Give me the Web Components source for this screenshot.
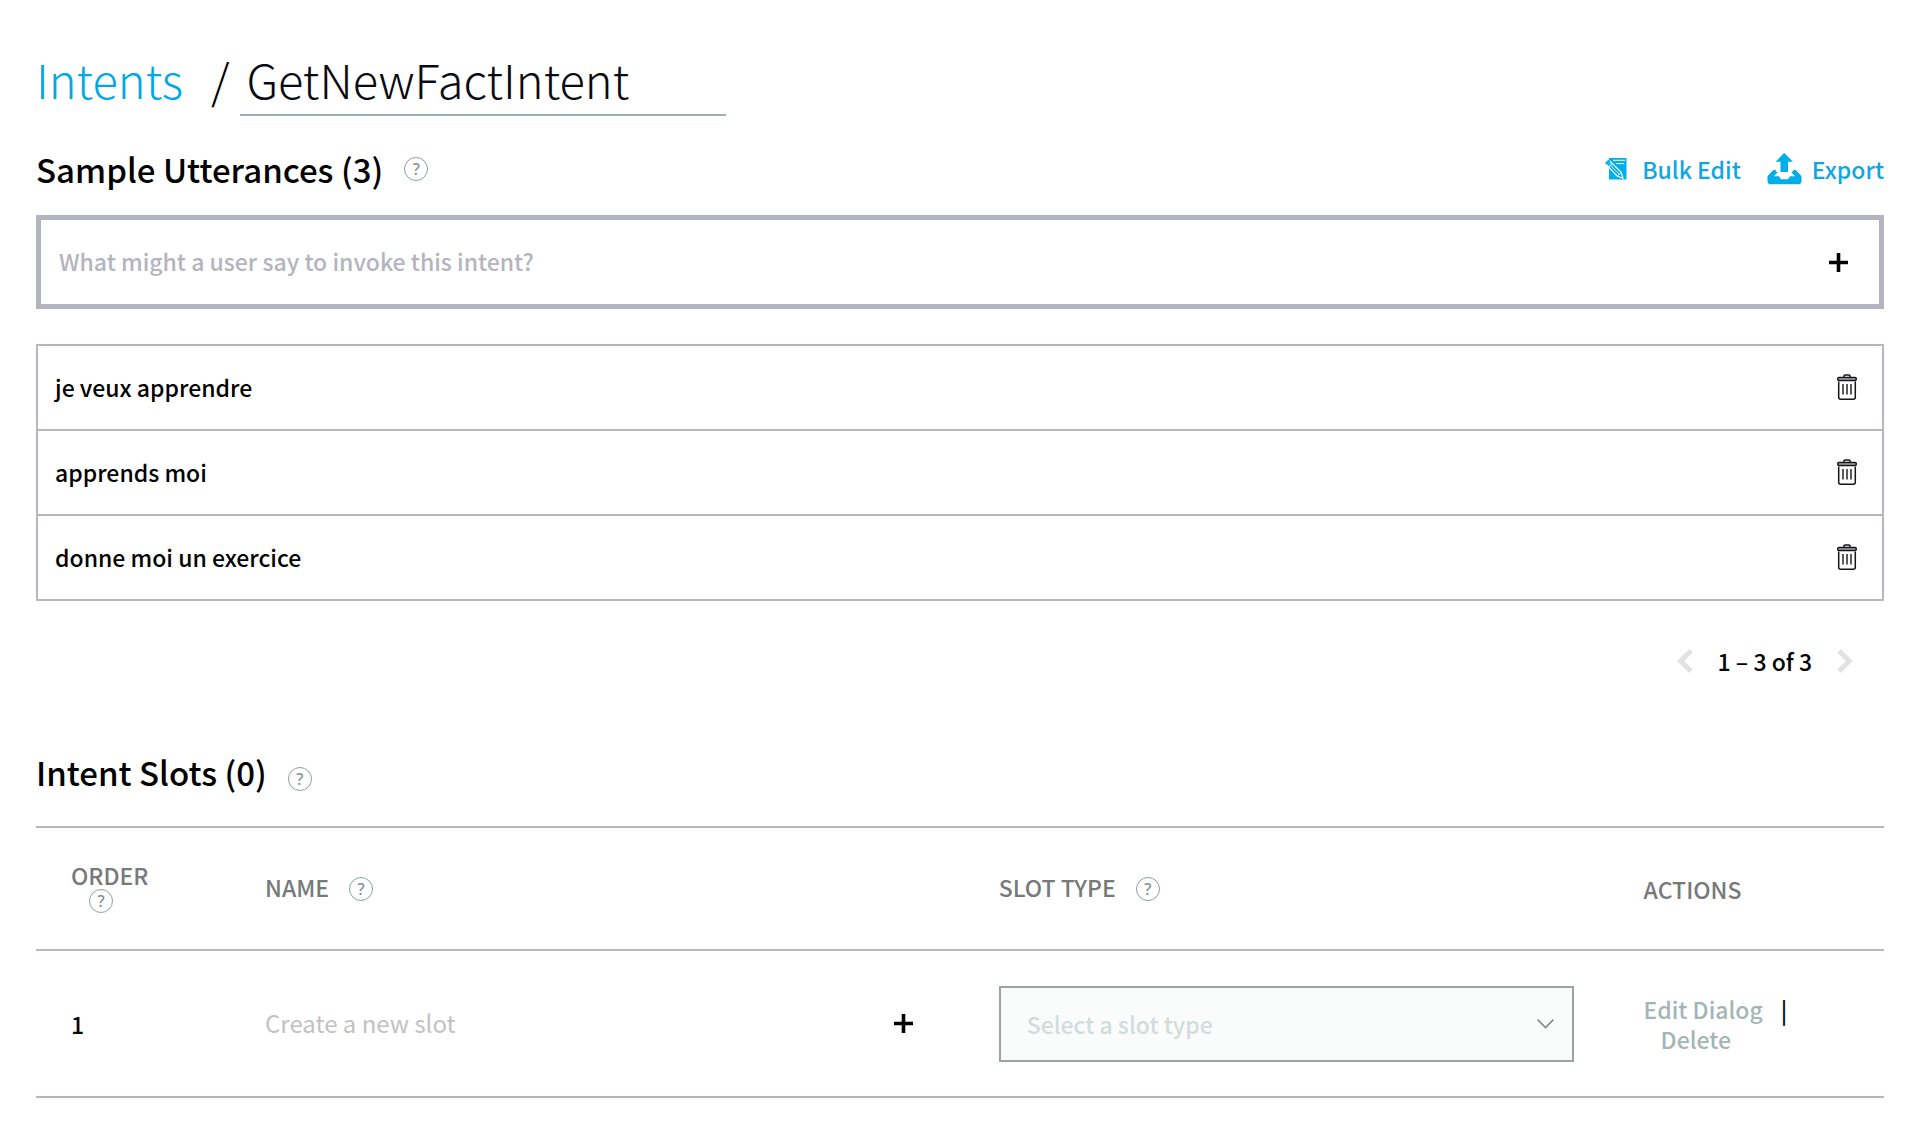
<!DOCTYPE html>
<html lang="en">
<head>
<meta charset="utf-8">
<title>GetNewFactIntent</title>
<style>
  body {
    margin: 0;
    background: #fff;
    color: #000;
    font-family: "Noto Sans CJK SC", "Noto Sans", sans-serif;
    font-size: 23px;
    font-weight: 500;
    line-height: 30px;
  }
</style>
</head>
<body>
<intent-page>
  <intent-title slot="title" name="GetNewFactIntent">Intents</intent-title>
  <section-head slot="utterances-head" label="Sample Utterances (3)">
    <tool-link icon="edit">Bulk Edit</tool-link>
    <tool-link icon="export">Export</tool-link>
  </section-head>
  <utterance-input slot="utterances"></utterance-input>
  <utterance-list slot="utterances">
    <utterance-item>je veux apprendre</utterance-item>
    <utterance-item>apprends moi</utterance-item>
    <utterance-item>donne moi un exercice</utterance-item>
  </utterance-list>
  <page-nav slot="utterances">1 – 3 of 3</page-nav>
  <section-head slot="slots-head" label="Intent Slots (0)" low-help></section-head>
  <slot-table slot="slots"></slot-table>
</intent-page>

<script>
const BASE = `
  *, *::before, *::after { box-sizing: border-box; }
  button, input, select { font: inherit; color: inherit; background: none; border: 0; padding: 0; margin: 0; border-radius: 0; }
  button { cursor: pointer; display: inline-flex; }
  input:focus { outline: none; }
  a { text-decoration: none; }
  svg { display: block; flex: none; }
`;
const PLUS = `<svg width="19" height="19" viewBox="0 0 19 19" stroke="#000" stroke-width="3.6" aria-hidden="true"><path d="M9.5 0v19M0 9.5h19"/></svg>`;

function define(name, css, html) {
  customElements.define(name, class extends HTMLElement {
    constructor() {
      super();
      const root = this.attachShadow({ mode: 'open' });
      const markup = typeof html === 'function' ? html(this) : html;
      root.innerHTML = `<style>${BASE}${css}</style>${markup}`;
    }
  });
}

define('help-icon', `
  :host { display: inline-flex; }
  button { width: 24px; height: 24px; border: 1px solid #8c9e9e; border-radius: 50%;
    color: #7f9292; font-family: "Noto Sans", sans-serif; font-size: 16px; line-height: 22px; align-items: center; justify-content: center; }
`, `<button type="button" aria-label="Help"><span>?</span></button>`);

define('intent-title', `
  :host { display: block; }
  h1 { display: flex; align-items: flex-start; margin: 0; font-size: 47px; line-height: 70px; font-weight: 300; }
  a { color: #00a8e6; }
  .sep { margin-left: 28px; margin-right: 11px; }
  input { width: 486px; height: 72px; padding: 0 6px 2px; border-bottom: 2px solid #9bb0b0; color: #0a0a14; }
`, el => `<h1><a href="#intents"><slot></slot></a><span class="sep">/</span><input aria-label="Intent name" value="${el.getAttribute('name')}"></h1>`);

define('section-head', `
  :host { display: flex; align-items: center; justify-content: space-between; }
  .lead { display: flex; align-items: center; gap: 21px; }
  :host([low-help]) .lead { align-items: flex-end; }
  h2 { margin: 0; font-size: 33px; line-height: 38px; font-weight: 500; }
  .tools { display: flex; align-items: center; gap: 26px; }
`, el => `<div class="lead"><h2>${el.getAttribute('label')}</h2><help-icon></help-icon></div><div class="tools"><slot></slot></div>`);

const TOOL_ICONS = {
  edit: `<svg width="22" height="22" viewBox="0 0 22 22" aria-hidden="true">
    <path d="M4 0h17.500v21.500H4z" fill="#00aeea"/>
    <path d="M8 2.300h12M11 5.600h8" stroke="#fff" stroke-width="1"/>
    <path d="M1.600 6.600 5 3.200 16.200 14.200 18 20 12.200 18.200z" fill="#00aeea" stroke="#fff" stroke-width="1.200"/>
    <path d="M4 8.800 7 5.600M4.800 6.600 14.400 16.400M12.600 17.800l3.200-3.200" stroke="#fff" stroke-width=".9" fill="none"/>
    <path d="M0 5 3.400 1.800 5.400 3.700 2 7z" fill="#00aeea"/></svg>`,
  export: `<svg width="35" height="32" viewBox="0 0 35 32" fill="#00aeea" aria-hidden="true">
    <path d="M17.200 0 26 8.700h-5V19h-7.500V8.700H8.700z"/>
    <path d="M3.500 17H7.500l3 2.400-3.700 3.800h5L14 26.200h7L23.200 23.200h5L24.500 19.400 27.500 17h4L34.500 23.500V29l-1.600 2.300H2.100L.500 29v-5.500z"/><path d="M5 21.500 9.300 17h-4.500L1 21.500zM30 21.500 25.700 17h4.500l3.800 4.500z" fill="#00aeea"/><path d="M0 16h7.200L1 22.600H0zM35 16h-7.200L34 22.600h1z" fill="#fff"/></svg>`
};
define('tool-link', `
  :host { display: flex; }
  a { display: flex; align-items: center; color: #10a5e4; }
  a.edit { gap: 15px; }
  a.export { gap: 10px; }
`, el => { const k = el.getAttribute('icon'); return `<a class="${k}" href="#${k}">${TOOL_ICONS[k]}<slot></slot></a>`; });

define('utterance-input', `
  :host { display: block; margin-top: 27px; }
  .box { display: flex; align-items: center; height: 94px; border: 5px solid #b4b4be; padding: 0 31px 0 18px; }
  input { flex: 1; height: 60px; padding-bottom: 2px; }
  input::placeholder { color: #b4b4be; opacity: 1; }
`, `<div class="box"><input aria-label="New sample utterance" placeholder="What might a user say to invoke this intent?"><button type="button" aria-label="Add utterance">${PLUS}</button></div>`);

define('utterance-list', `
  :host { display: block; margin-top: 35px; border: 2px solid #b7b7c2; border-bottom: 0; }
`, `<div role="list"><slot></slot></div>`);

define('utterance-item', `
  :host { display: block; border-bottom: 2px solid #b7b7c2; }
  .row { display: flex; align-items: center; justify-content: space-between; height: 83px; padding: 0 25px 2px 17px; }
`, `<div class="row" role="listitem"><span><slot></slot></span><button type="button" aria-label="Delete utterance">
  <svg width="20" height="26" viewBox="0 0 20 26" fill="none" stroke="#16161a" stroke-width="1.500" aria-hidden="true">
    <rect x=".8" y="3.600" width="18.400" height="2.800" rx="1" fill="#aaa"/>
    <path d="M7 3.400V2q0-1 1-1h4q1 0 1 1v1.400"/>
    <path d="M1.700 7.500v15.700q0 2 2 2h12.600q2 0 2-2V7.500"/>
    <path d="M6 10v10.500M10 10v10.500M14 10v10.500" stroke-width="1.400"/></svg></button></div>`);

define('page-nav', `
  :host { display: flex; align-items: center; justify-content: flex-end; height: 32px; margin-top: 44px; padding-right: 31px; gap: 25px; }
`, `<button type="button" aria-label="Previous page"><svg width="16" height="24" viewBox="0 0 16 24" fill="none" stroke="#e1e1e6" stroke-width="5"><path d="M14 1.800 3.600 12 14 22.200"/></svg></button>
  <span><slot></slot></span>
  <button type="button" aria-label="Next page"><svg width="16" height="24" viewBox="0 0 16 24" fill="none" stroke="#e1e1e6" stroke-width="5"><path d="M2 1.800 12.400 12 2 22.200"/></svg></button>`);

define('slot-table', `
  :host { display: block; margin-top: 35px; }
  table { width: 100%; table-layout: fixed; border-collapse: separate; border-spacing: 0; border-top: 2px solid #b7b7c2; }
  .order { width: 10.5%; } .name { width: 39.7%; } .type { width: 34.9%; }
  th, td { padding: 0 35px; text-align: left; vertical-align: middle; border-bottom: 2px solid #b7b7c2; }
  th { height: 123px; font-weight: 500; color: #77797a; }
  td { height: 147px; }
  .head { display: flex; align-items: flex-end; gap: 20px; line-height: 28px; margin-bottom: 4px; }
  th.order .head { display: block; }
  th.order help-icon { display: flex; margin-left: 18px; }
  .new { display: flex; align-items: center; padding-right: 16px; }
  .new input { flex: 1; min-width: 0; height: 60px; font-size: 24px; font-weight: 400; padding-bottom: 2px; }
  .new input::placeholder { color: #c2c2c2; opacity: 1; }
  .pick { display: grid; align-items: center; }
  .pick > * { grid-area: 1 / 1; }
  select { appearance: none; width: 100%; height: 76px; padding: 0 26px; background: #fafcfb; border: 2px solid #9ba3a3; color: #d3dcdc; opacity: 1; }
  .pick svg { justify-self: end; margin-right: 20px; pointer-events: none; }
  .actions a { color: #a3b5b5; }
  .actions .bar + a { display: inline-block; margin-left: 17px; }
  .bar { margin-left: 18px; }
`, `<table>
  <thead><tr>
    <th class="order" scope="col"><div class="head">ORDER<help-icon></help-icon></div></th>
    <th class="name" scope="col"><div class="head">NAME<help-icon></help-icon></div></th>
    <th class="type" scope="col"><div class="head">SLOT TYPE<help-icon></help-icon></div></th>
    <th scope="col">ACTIONS</th>
  </tr></thead>
  <tbody><tr>
    <td>1</td>
    <td><div class="new"><input aria-label="Slot name" placeholder="Create a new slot"><button type="button" aria-label="Add slot">${PLUS}</button></div></td>
    <td><div class="pick"><select aria-label="Slot type" disabled><option>Select a slot type</option></select>
      <svg width="17" height="10" viewBox="0 0 17 10" fill="none" stroke="#858b8b" stroke-width="1.500" aria-hidden="true"><path d="M.6.600 8.500 8.600 16.400.600"/></svg></div></td>
    <td class="actions"><a href="#dialog">Edit Dialog</a><span class="bar">|</span> <a href="#delete">Delete</a></td>
  </tr></tbody></table>`);

define('intent-page', `
  :host { display: block; padding: 44px 36px 40px; }
  main { display: flex; flex-direction: column; }
  .utterances { margin-top: 34px; }
  .slots { margin-top: 76px; }
`, `<main>
  <slot name="title"></slot>
  <section class="utterances"><slot name="utterances-head"></slot><slot name="utterances"></slot></section>
  <section class="slots"><slot name="slots-head"></slot><slot name="slots"></slot></section>
</main>`);
</script>
</body>
</html>
